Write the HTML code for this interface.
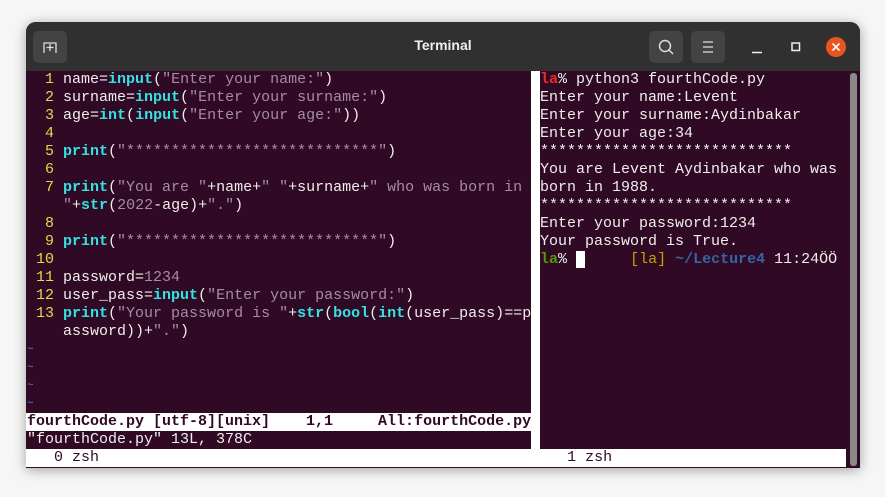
<!DOCTYPE html>
<html><head><meta charset="utf-8"><style>
*{margin:0;padding:0;box-sizing:border-box}
body{width:885px;height:497px;background:#f6f6f6;position:relative;overflow:hidden;font-family:"Liberation Mono","DejaVu Sans Mono",monospace}
.win{position:absolute;left:26px;top:22px;width:834px;height:446px;background:#300a24;border-radius:10px 10px 0 0;box-shadow:0 2px 12px rgba(0,0,0,.35);overflow:hidden}
.tb{position:absolute;left:0;top:0;width:834px;height:49px;background:#303030}
.btn{position:absolute;top:9px;width:34px;height:32px;background:#434343;border-radius:5px}
.title{position:absolute;left:0;width:834px;top:15px;text-align:center;color:#f0f0f0;font:bold 14px "Liberation Sans",sans-serif}
.r{position:absolute;height:18px;line-height:18px;font-size:15px;white-space:pre;color:#eeeeec}
.n{color:#e9d64a}.k{color:#34e2e2;font-weight:bold}.s{color:#a48ca4}.p{color:#eeeeec}
.t{color:#5f7fc8;font-size:11px}
</style></head><body>
<div class="win">
 <div class="tb">
  <div class="btn" style="left:7px"><svg width="34" height="32"><path d="M11 22V12h12v10M17 13v7M13.5 16.5h7" stroke="#ddd" stroke-width="1.3" fill="none"/></svg></div>
  <div class="title">Terminal</div>
  <div class="btn" style="left:623px"><svg width="34" height="32"><circle cx="16" cy="15" r="5.5" stroke="#ddd" stroke-width="1.5" fill="none"/><path d="M20 19l4 4" stroke="#ddd" stroke-width="1.5"/></svg></div>
  <div class="btn" style="left:665px"><svg width="34" height="32"><path d="M12 11h10M12 16h10M12 21h10" stroke="#ddd" stroke-width="1.3"/></svg></div>
  <svg style="position:absolute;left:720px;top:12px" width="110" height="26"><path d="M6 18.5h10" stroke="#eee" stroke-width="1.5"/><rect x="46" y="9" width="7.5" height="7.5" stroke="#eee" stroke-width="1.5" fill="none"/><circle cx="90" cy="13" r="10" fill="#e95420"/><path d="M86.5 9.5l7 7M93.5 9.5l-7 7" stroke="#fff" stroke-width="1.6"/></svg>
 </div>
</div>
<div style="position:absolute;left:531px;top:71px;width:9px;height:378px;background:#fff"></div>
<div style="position:absolute;left:26px;top:413px;width:505px;height:18px;background:#fff"></div>
<div style="position:absolute;left:26px;top:449px;width:820px;height:18px;background:#fff"></div>
<div style="position:absolute;left:850px;top:73px;width:7px;height:393px;background:#8a8a8a;border-radius:3px"></div>

<div class="r" style="left:27px;top:71px"><span class="n">  1 </span>name=<span class="k">input</span>(<span class="s">"Enter your name:"</span>)</div>
<div class="r" style="left:27px;top:89px"><span class="n">  2 </span>surname=<span class="k">input</span>(<span class="s">"Enter your surname:"</span>)</div>
<div class="r" style="left:27px;top:107px"><span class="n">  3 </span>age=<span class="k">int</span>(<span class="k">input</span>(<span class="s">"Enter your age:"</span>))</div>
<div class="r" style="left:27px;top:125px"><span class="n">  4 </span></div>
<div class="r" style="left:27px;top:143px"><span class="n">  5 </span><span class="k">print</span>(<span class="s">"****************************"</span>)</div>
<div class="r" style="left:27px;top:161px"><span class="n">  6 </span></div>
<div class="r" style="left:27px;top:179px"><span class="n">  7 </span><span class="k">print</span>(<span class="s">"You are "</span>+name+<span class="s">" "</span>+surname+<span class="s">" who was born in </span></div>
<div class="r" style="left:27px;top:197px">    <span class="s">"</span>+<span class="k">str</span>(<span class="s">2022</span>-age)+<span class="s">"."</span>)</div>
<div class="r" style="left:27px;top:215px"><span class="n">  8 </span></div>
<div class="r" style="left:27px;top:233px"><span class="n">  9 </span><span class="k">print</span>(<span class="s">"****************************"</span>)</div>
<div class="r" style="left:27px;top:251px"><span class="n"> 10 </span></div>
<div class="r" style="left:27px;top:269px"><span class="n"> 11 </span>password=<span class="s">1234</span></div>
<div class="r" style="left:27px;top:287px"><span class="n"> 12 </span>user_pass=<span class="k">input</span>(<span class="s">"Enter your password:"</span>)</div>
<div class="r" style="left:27px;top:305px"><span class="n"> 13 </span><span class="k">print</span>(<span class="s">"Your password is "</span>+<span class="k">str</span>(<span class="k">bool</span>(<span class="k">int</span>(user_pass)==p</div>
<div class="r" style="left:27px;top:323px">    assword))+<span class="s">"."</span>)</div>
<div class="r t" style="left:27px;top:341px">~</div>
<div class="r t" style="left:27px;top:359px">~</div>
<div class="r t" style="left:27px;top:377px">~</div>
<div class="r t" style="left:27px;top:395px">~</div>
<div class="r" style="left:27px;top:413px;color:#300a24;font-weight:bold">fourthCode.py [utf-8][unix]    1,1     All:fourthCode.py</div>
<div class="r" style="left:27px;top:431px">"fourthCode.py" 13L, 378C</div>
<div class="r" style="left:27px;top:449px;color:#300a24">   0 zsh                                                    1 zsh</div>

<div class="r" style="left:540px;top:71px"><b style="color:#ef2929">la</b>% python3 fourthCode.py</div>
<div class="r" style="left:540px;top:89px">Enter your name:Levent</div>
<div class="r" style="left:540px;top:107px">Enter your surname:Aydinbakar</div>
<div class="r" style="left:540px;top:125px">Enter your age:34</div>
<div class="r" style="left:540px;top:143px">****************************</div>
<div class="r" style="left:540px;top:161px">You are Levent Aydinbakar who was</div>
<div class="r" style="left:540px;top:179px">born in 1988.</div>
<div class="r" style="left:540px;top:197px">****************************</div>
<div class="r" style="left:540px;top:215px">Enter your password:1234</div>
<div class="r" style="left:540px;top:233px">Your password is True.</div>
<div class="r" style="left:540px;top:251px"><b style="color:#4e9a06">la</b>% <span style="background:#fff"> </span>     <span style="color:#c4a000">[la]</span> <b style="color:#3465a4">~/Lecture4</b> 11:24ÖÖ</div>
</body></html>
